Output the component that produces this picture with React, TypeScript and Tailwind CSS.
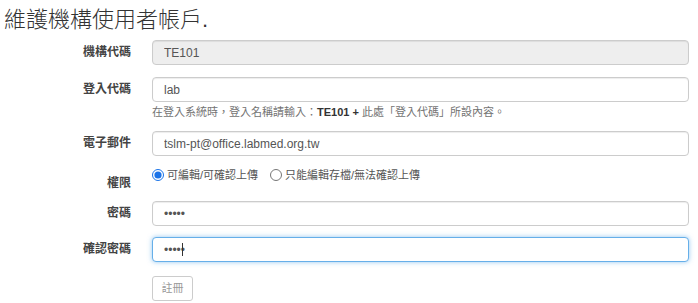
import React from "react";

const font = { fontFamily: '"Liberation Sans", "Noto Sans CJK TC", sans-serif' };

interface RowProps {
  label: string;
  children: React.ReactNode;
  className?: string;
  labelPad?: string;
}

const Row: React.FC<RowProps> = ({ label, children, className, labelPad }) => (
  <div className={"flex " + (className || "")}>
    <label
      className={
        "w-[131px] shrink-0 text-right text-[12px] font-bold leading-[15px] text-[#444] " + (labelPad || "pt-[5px]")
      }
    >
      {label}
    </label>
    <div className="ml-[21px] w-[537px]">{children}</div>
  </div>
);

const base =
  "block h-[25px] w-full rounded-[4px] border px-[11px] text-[12px] text-[#555] outline-none";
const normal = base + " border-[#ccc] shadow-[inset_0_1px_1px_rgba(0,0,0,0.075)]";

export default function App() {
  return (
    <div style={font} className="h-[303px] w-[698px] overflow-hidden bg-white text-[#333]">
      <h1 className="pl-[4px] pt-[6px] text-[22px] font-light leading-[28px] text-[#333]">維護機構使用者帳戶.</h1>
      <form className="mt-[6px] flex flex-col">
        <Row label="機構代碼">
          <input className={normal + " bg-[#eee]"} value="TE101" readOnly disabled />
        </Row>
        <Row label="登入代碼" className="mt-[12px]">
          <input className={normal + " bg-white"} value="lab" readOnly />
          <p className="mt-[3px] text-[11px] leading-[14px] text-[#737373]">
            在登入系統時，登入名稱請輸入：<b className="text-[#333]">TE101 +</b> 此處「登入代碼」所設內容。
          </p>
        </Row>
        <Row label="電子郵件" className="mt-[12px]">
          <input className={normal + " bg-white"} value="tslm-pt@office.labmed.org.tw" readOnly />
        </Row>
        <Row label="權限" className="mt-[6px]" labelPad="pt-[14px]">
          <div className="flex items-center gap-[4px] pt-[6px] text-[11px] leading-[14px] text-[#555]">
            <span className="flex items-center gap-[3px]">
              <input type="radio" name="perm" defaultChecked className="m-0 h-[12px] w-[12px] accent-[#1a73e8]" />
              可編輯/可確認上傳
            </span>
            <span className="ml-[8px] flex items-center gap-[3px]">
              <input type="radio" name="perm" className="m-0 h-[12px] w-[12px]" />
              只能編輯存檔/無法確認上傳
            </span>
          </div>
        </Row>
        <Row label="密碼" className="mt-[10px]">
          <input type="password" className={normal + " bg-white text-[9px]"} value="12345" readOnly />
        </Row>
        <Row label="確認密碼" className="mt-[11px]">
          <div className="relative">
            <input
              type="password"
              className={base + " border-[#66afe9] bg-white text-[9px] shadow-[0_0_5px_rgba(102,175,233,0.7)]"}
              value="12345"
              readOnly
            />
            <span className="absolute left-[30px] top-[6px] h-[13px] w-px bg-[#333]" />
          </div>
        </Row>
        <div className="ml-[152px] mt-[13px]">
          <button
            type="button"
            className="h-[25px] w-[41px] rounded-[3px] border border-[#ccc] bg-white text-[11px] text-[#999]"
          >
            註冊
          </button>
        </div>
      </form>
    </div>
  );
}
